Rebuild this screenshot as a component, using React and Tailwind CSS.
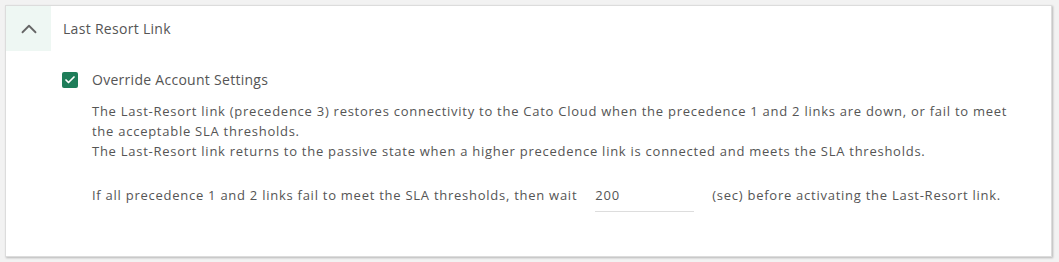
import { ChevronUp, Check } from 'lucide-react';

export default function App() {
  return (
    <div className="min-h-[262px] bg-[#f2f2f2] pt-[5px] pl-[5px] font-['Open_Sans',sans-serif] text-[#555]">
      <div className="w-[1047px] h-[252px] bg-white border border-[#dcdcdc] shadow-[1px_1px_2px_rgba(0,0,0,0.25)]">
        {/* Header */}
        <div className="flex h-[45px] items-center">
          <div className="w-[45px] h-[45px] bg-[#eef7f3] flex items-center justify-center">
            <ChevronUp className="w-[26px] h-[26px] text-[#666]" strokeWidth={1.7} />
          </div>
          <span className="ml-[12px] text-[14px] tracking-[0.3px]">Last Resort Link</span>
        </div>

        {/* Body */}
        <div className="pl-[56px] pt-[21px]">
          <label className="flex items-center gap-[14px]">
            <span className="w-[16px] h-[16px] rounded-[2px] bg-[#1e7d59] flex items-center justify-center">
              <Check className="w-[12px] h-[12px] text-white" strokeWidth={3.5} />
            </span>
            <span className="text-[14px] leading-[16px] tracking-[0.28px]">Override Account Settings</span>
          </label>

          <div className="pl-[30px] pt-[13px] text-[13px] leading-[20px] tracking-[0.74px]">
            <p>
              The Last-Resort link (precedence 3) restores connectivity to the Cato Cloud when the precedence 1 and 2 links are down, or fail to meet
              <br />
              the acceptable SLA thresholds.
            </p>
            <p>The Last-Resort link returns to the passive state when a higher precedence link is connected and meets the SLA thresholds.</p>

            <div className="flex items-center mt-[17px]">
              <span>If all precedence 1 and 2 links fail to meet the SLA thresholds, then wait</span>
              <input
                defaultValue="200"
                className="ml-[18px] w-[99px] h-[34px] border-b border-[#ddd] outline-none text-[13px] tracking-[0.74px] text-[#555] pt-[1px]"
              />
              <span className="ml-[18px]">(sec) before activating the Last-Resort link.</span>
            </div>
          </div>
        </div>
      </div>
    </div>
  );
}
